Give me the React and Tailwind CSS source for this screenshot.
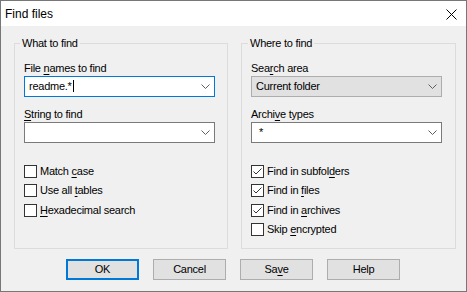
import React from "react";

function U({ children }) {
  return <span className="underline underline-offset-[2px] decoration-[1px]">{children}</span>;
}

function Chevron() {
  return (
    <svg width="9" height="5" viewBox="0 0 9 5" className="shrink-0">
      <path d="M0.5 0.5 L4.5 4.5 L8.5 0.5" fill="none" stroke="#606060" strokeWidth="1" />
    </svg>
  );
}

function Check({ checked, children, className = "" }) {
  return (
    <div className={"flex items-center h-[15px] " + className}>
      <div className="w-[13px] h-[13px] border border-[#333333] bg-white flex items-center justify-center shrink-0">
        {checked && (
          <svg width="11" height="11" viewBox="0 0 11 11">
            <path d="M1.5 5.5 L4 8 L9.5 2.5" fill="none" stroke="#333333" strokeWidth="1" />
          </svg>
        )}
      </div>
      <span className="ml-[3px]">{children}</span>
    </div>
  );
}

function Combo({ children, variant = "edit" }) {
  const cls =
    variant === "focus"
      ? "border-[#0078d7] bg-white"
      : variant === "list"
      ? "border-[#adadad] bg-[#e1e1e1]"
      : "border-[#7a7a7a] bg-white";
  return (
    <div className={"w-[191px] h-[21px] border flex items-center pl-[4px] pr-[4px] pb-[1px] " + cls}>
      <div className="flex items-center leading-[15px] flex-1 min-w-0">{children}</div>
      <Chevron />
    </div>
  );
}

function Button({ children, primary }) {
  return (
    <div
      className={
        "w-[73px] h-[21px] flex items-center justify-center bg-[#e1e1e1] leading-[15px] " +
        (primary ? "border-2 border-[#0078d7]" : "border border-[#adadad]")
      }
    >
      {children}
    </div>
  );
}

export default function App() {
  return (
    <div className="w-[467px] h-[292px] border border-[#777777] bg-[#f0f0f0] flex flex-col text-black font-['Liberation_Sans',Arial,sans-serif] text-[11px] tracking-[-0.25px] overflow-hidden">
      <div className="h-[25px] bg-white flex items-center justify-between shrink-0">
        <span className="ml-[4px] text-[12px] tracking-normal leading-[15px] pt-[1px]">Find files</span>
        <svg width="11" height="11" viewBox="0 0 11 11" className="mr-[9px] mt-[1px]">
          <path d="M0.5 0.5 L10.5 10.5 M10.5 0.5 L0.5 10.5" fill="none" stroke="#000" strokeWidth="1" />
        </svg>
      </div>

      <div className="flex gap-[13px] pl-[13px] pt-[11px]">
        <fieldset className="w-[214px] h-[212px] border border-[#dcdcdc] pl-[9px] pt-[11px]">
          <legend className="-ml-[4px] px-[2px] leading-[13px]">What to find</legend>
          <div className="leading-[15px]">
            File <U>n</U>ames to find
          </div>
          <Combo variant="focus">
            <span>readme.*</span>
            <span className="inline-block w-px h-[12px] bg-black ml-[1px]" />
          </Combo>
          <div className="leading-[15px] mt-[10px]">
            <U>S</U>tring to find
          </div>
          <Combo />
          <Check className="mt-[21px]">
            Match <U>c</U>ase
          </Check>
          <Check className="mt-[4px]">
            Use all <U>t</U>ables
          </Check>
          <Check className="mt-[5px]">
            <U>H</U>exadecimal search
          </Check>
        </fieldset>

        <fieldset className="w-[215px] h-[212px] border border-[#dcdcdc] pl-[9px] pt-[11px]">
          <legend className="-ml-[3px] px-[2px] leading-[13px]">Where to find</legend>
          <div className="leading-[15px]">
            Sea<U>r</U>ch area
          </div>
          <Combo variant="list">
            <span>Current folder</span>
          </Combo>
          <div className="leading-[15px] mt-[10px]">
            Archi<U>v</U>e types
          </div>
          <Combo>
            <span className="ml-[3px]">*</span>
          </Combo>
          <Check checked className="mt-[21px]">
            Find in subfol<U>d</U>ers
          </Check>
          <Check checked className="mt-[4px]">
            Find in <U>f</U>iles
          </Check>
          <Check checked className="mt-[5px]">
            Find in <U>a</U>rchives
          </Check>
          <Check className="mt-[4px]">
            Skip <U>e</U>ncrypted
          </Check>
        </fieldset>
      </div>

      <div className="flex justify-center gap-[14px] mt-[10px] pr-[1px]">
        <Button primary>OK</Button>
        <Button>Cancel</Button>
        <Button>
          Sa<U>v</U>e
        </Button>
        <Button>Help</Button>
      </div>
    </div>
  );
}
